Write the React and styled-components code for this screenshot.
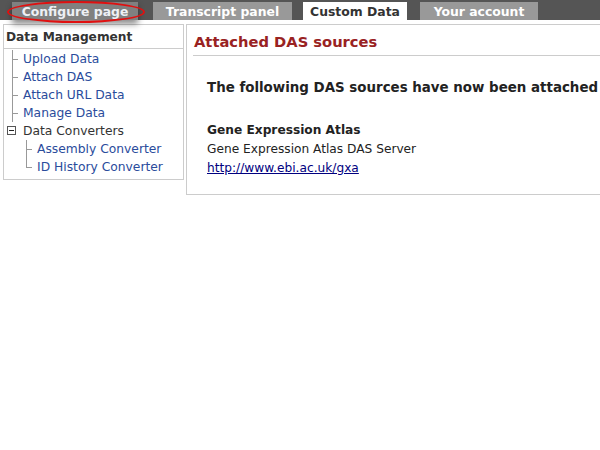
import React from "react";
import styled, { createGlobalStyle } from "styled-components";

const GlobalStyle = createGlobalStyle`
  body {
    margin: 0;
    background: #ffffff;
    font-family: "DejaVu Sans", Verdana, sans-serif;
    color: #333333;
  }
`;

// Top tab bar
const TabBar = styled.div`
  position: relative;
  height: 20px;
  background: #555555;
  display: flex;
  align-items: flex-end;
`;

const Tab = styled.div`
  width: ${({ $w }) => $w}px;
  margin-left: ${({ $ml }) => $ml}px;
  height: 18px;
  line-height: 19px;
  text-align: center;
  font-size: 12.4px;
  font-weight: bold;
  white-space: nowrap;
  background: ${({ $active }) => ($active ? "#ffffff" : "#999999")};
  color: ${({ $active }) => ($active ? "#333333" : "#ffffff")};
  ${({ $dim }) =>
    $dim &&
    "background: #808080; color: #eef0f5; box-shadow: 0 4px 6px rgba(0,0,0,0.45);"}
`;

// red annotation ring round the first tab
const Ring = styled.div`
  position: absolute;
  left: 7px;
  top: 1px;
  width: 134px;
  height: 18px;
  border: 2px solid #e01010;
  border-radius: 50%;
  pointer-events: none;
`;

const Page = styled.div`
  display: flex;
  align-items: flex-start;
  padding: 4px 0 0 3px;
  gap: 2px;
`;

// Left menu
const Side = styled.div`
  flex: 0 0 auto;
  width: 179px;
  border: 1px solid #cccccc;
  padding-bottom: 3px;
`;

const SideHead = styled.div`
  height: 23px;
  line-height: 24px;
  padding-left: 2px;
  font-size: 12.2px;
  font-weight: bold;
  color: #333333;
  border-bottom: 1px solid #cccccc;
  margin-bottom: 1px;
`;

const Tree = styled.ul`
  list-style: none;
  margin: 0;
  padding: 0 0 0 ${({ $indent }) => $indent || 8}px;
`;

const Node = styled.li`
  position: relative;
  padding-left: 11px;
  font-size: 12.3px;
  line-height: 18px;
  color: ${({ $plain }) => ($plain ? "#333333" : "#2a4c9c")};
  white-space: nowrap;

  &::before {
    content: "";
    position: absolute;
    left: 0;
    top: 0;
    height: ${({ $last }) => ($last ? "9px" : "18px")};
    border-left: 1px solid #999999;
    display: ${({ $box }) => ($box ? "none" : "block")};
  }
  &::after {
    content: "";
    position: absolute;
    left: 0;
    top: 9px;
    width: 6px;
    border-top: 1px solid #999999;
    display: ${({ $box }) => ($box ? "none" : "block")};
  }
`;

const Box = styled.span`
  position: absolute;
  left: -5px;
  top: 4px;
  width: 7px;
  height: 7px;
  border: 1px solid #555555;
  background: #ffffff;
  &::after {
    content: "";
    position: absolute;
    left: 1px;
    top: 3px;
    width: 5px;
    border-top: 1px solid #222222;
  }
`;

const Label = styled.span``;

// Main panel
const Main = styled.div`
  flex: 1;
  min-width: 0;
  overflow: hidden;
  border: 1px solid #cccccc;
  border-right: none;
  padding: 0 0 16px 5px;
`;

const MainHead = styled.h2`
  margin: 0 0 0 1px;
  padding: 8px 0 5px 1px;
  font-size: 14.7px;
  font-weight: bold;
  color: #992222;
  border-bottom: 1px solid #cccccc;
`;

const Lead = styled.p`
  margin: 24px 0 0 15px;
  font-size: 13.4px;
  font-weight: bold;
  white-space: nowrap;
  color: #222222;
`;

const Source = styled.div`
  margin: 26px 0 0 15px;
  font-size: 12.2px;
  line-height: 19px;
  color: #222222;
`;

const SourceName = styled.div`
  font-weight: bold;
`;

const SourceLink = styled.a`
  color: #000080;
  text-decoration: underline;
`;

export default function App() {
  return (
    <>
      <GlobalStyle />
      <TabBar>
        <Tab $dim $w={126} $ml={12}>Configure page</Tab>
        <Tab $w={139} $ml={15}>Transcript panel</Tab>
        <Tab $active $w={104} $ml={11}>Custom Data</Tab>
        <Tab $w={118} $ml={13}>Your account</Tab>
        <Ring />
      </TabBar>
      <Page>
        <Side>
          <SideHead>Data Management</SideHead>
          <Tree>
            <Node>Upload Data</Node>
            <Node>Attach DAS</Node>
            <Node>Attach URL Data</Node>
            <Node>Manage Data</Node>
            <Node $plain $box>
              <Box />
              <Label>Data Converters</Label>
              <Tree $indent={3}>
                <Node>Assembly Converter</Node>
                <Node $last>ID History Converter</Node>
              </Tree>
            </Node>
          </Tree>
        </Side>
        <Main>
          <MainHead>Attached DAS sources</MainHead>
          <Lead>The following DAS sources have now been attached</Lead>
          <Source>
            <SourceName>Gene Expression Atlas</SourceName>
            <div>Gene Expression Atlas DAS Server</div>
            <SourceLink href="#">http://www.ebi.ac.uk/gxa</SourceLink>
          </Source>
        </Main>
      </Page>
    </>
  );
}
